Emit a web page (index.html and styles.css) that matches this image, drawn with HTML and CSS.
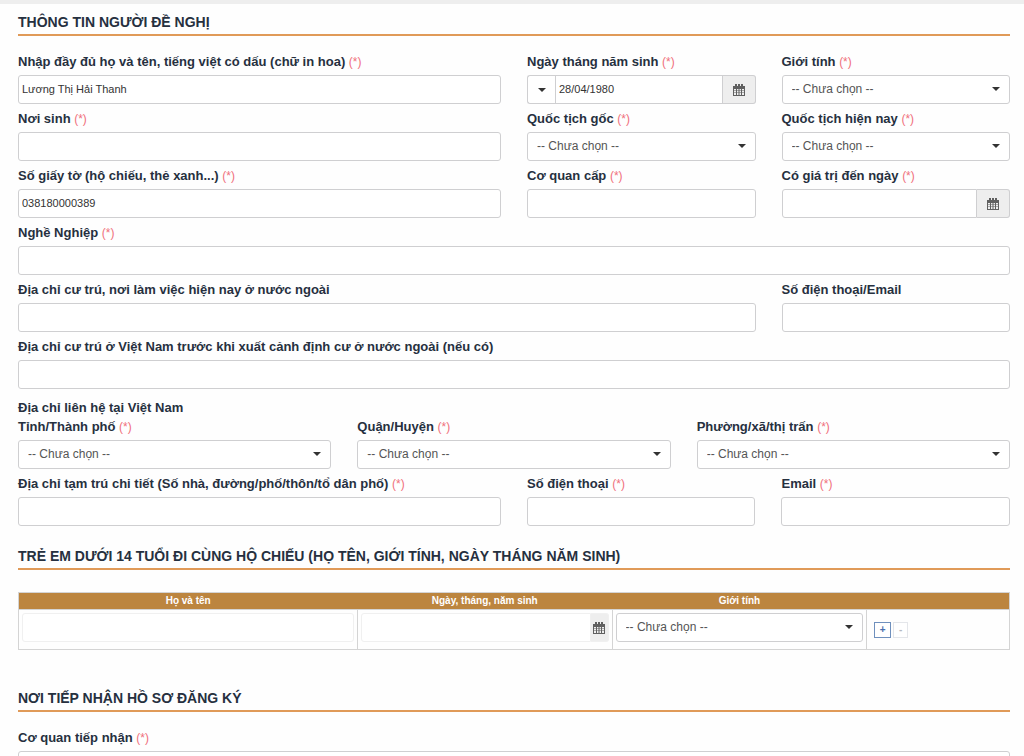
FILE: index.html
```
<!DOCTYPE html>
<html lang="vi">
<head>
<meta charset="utf-8">
<meta name="viewport" content="width=device-width, initial-scale=1">
<title>Thông tin người đề nghị</title>
<link rel="stylesheet" href="styles.css">
</head>
<body>
<svg class="sprite" aria-hidden="true">
  <symbol id="calendar" viewBox="0 0 12 12">
    <path fill="currentColor" fill-rule="evenodd" d="M0 2h2V0h2v2h1V0h2v2h1V0h2v2h2v10H0zM1 5h2v1.500H1zM4 5h1.500v1.500H4zM6.500 5H8v1.500H6.500zM9 5h2v1.500H9zM1 7h2v1.500H1zM4 7h1.500v1.500H4zM6.500 7H8v1.500H6.500zM9 7h2v1.500H9zM1 9h2v2H1zM4 9h1.500v2H4zM6.500 9H8v2H6.500zM9 9h2v2H9z"/>
  </symbol>
</svg>
<form class="page">
  <h2 class="title">THÔNG TIN NGƯỜI ĐỀ NGHỊ</h2>
  <div class="grid">
    <div class="field half">
      <label for="name">Nhập đầy đủ họ và tên, tiếng việt có dấu (chữ in hoa) <span class="req">(*)</span></label>
      <input class="control" id="name" type="text" value="Lương Thị Hải Thanh">
    </div>
    <div class="field quarter">
      <label for="dob">Ngày tháng năm sinh <span class="req">(*)</span></label>
      <div class="group">
        <button class="addon toggle caret" type="button" aria-label="Chọn kiểu ngày"></button>
        <input class="control" id="dob" type="text" value="28/04/1980">
        <button class="addon" type="button" aria-label="Mở lịch"><svg class="icon"><use href="#calendar"/></svg></button>
      </div>
    </div>
    <div class="field quarter">
      <label for="gender">Giới tính <span class="req">(*)</span></label>
      <div class="select caret"><select class="control" id="gender"><option>-- Chưa chọn --</option></select></div>
    </div>

    <div class="field half">
      <label for="birthplace">Nơi sinh <span class="req">(*)</span></label>
      <input class="control" id="birthplace" type="text">
    </div>
    <div class="field quarter">
      <label for="origin">Quốc tịch gốc <span class="req">(*)</span></label>
      <div class="select caret"><select class="control" id="origin"><option>-- Chưa chọn --</option></select></div>
    </div>
    <div class="field quarter">
      <label for="nationality">Quốc tịch hiện nay <span class="req">(*)</span></label>
      <div class="select caret"><select class="control" id="nationality"><option>-- Chưa chọn --</option></select></div>
    </div>

    <div class="field half">
      <label for="document">Số giấy tờ (hộ chiếu, thẻ xanh...) <span class="req">(*)</span></label>
      <input class="control" id="document" type="text" value="038180000389">
    </div>
    <div class="field quarter">
      <label for="issuer">Cơ quan cấp <span class="req">(*)</span></label>
      <input class="control" id="issuer" type="text">
    </div>
    <div class="field quarter">
      <label for="expiry">Có giá trị đến ngày <span class="req">(*)</span></label>
      <div class="group">
        <input class="control" id="expiry" type="text">
        <button class="addon" type="button" aria-label="Mở lịch"><svg class="icon"><use href="#calendar"/></svg></button>
      </div>
    </div>

    <div class="field full">
      <label for="job">Nghề Nghiệp <span class="req">(*)</span></label>
      <input class="control" id="job" type="text">
    </div>

    <div class="field wide">
      <label for="abroad">Địa chỉ cư trú, nơi làm việc hiện nay ở nước ngoài</label>
      <input class="control" id="abroad" type="text">
    </div>
    <div class="field quarter">
      <label for="contact">Số điện thoại/Email</label>
      <input class="control" id="contact" type="text">
    </div>

    <div class="field full">
      <label for="previous">Địa chỉ cư trú ở Việt Nam trước khi xuất cảnh định cư ở nước ngoài (nếu có)</label>
      <input class="control" id="previous" type="text">
    </div>
  </div>

  <h3 class="subtitle">Địa chỉ liên hệ tại Việt Nam</h3>
  <div class="grid">
    <div class="field third">
      <label for="province">Tỉnh/Thành phố <span class="req">(*)</span></label>
      <div class="select caret"><select class="control" id="province"><option>-- Chưa chọn --</option></select></div>
    </div>
    <div class="field third">
      <label for="district">Quận/Huyện <span class="req">(*)</span></label>
      <div class="select caret"><select class="control" id="district"><option>-- Chưa chọn --</option></select></div>
    </div>
    <div class="field third">
      <label for="ward">Phường/xã/thị trấn <span class="req">(*)</span></label>
      <div class="select caret"><select class="control" id="ward"><option>-- Chưa chọn --</option></select></div>
    </div>
    <div class="field half">
      <label for="address">Địa chỉ tạm trú chi tiết (Số nhà, đường/phố/thôn/tổ dân phố) <span class="req">(*)</span></label>
      <input class="control" id="address" type="text">
    </div>
    <div class="field quarter">
      <label for="phone">Số điện thoại <span class="req">(*)</span></label>
      <input class="control" id="phone" type="text">
    </div>
    <div class="field quarter">
      <label for="email">Email <span class="req">(*)</span></label>
      <input class="control" id="email" type="text">
    </div>
  </div>

  <h2 class="title spaced">TRẺ EM DƯỚI 14 TUỔI ĐI CÙNG HỘ CHIẾU (HỌ TÊN, GIỚI TÍNH, NGÀY THÁNG NĂM SINH)</h2>
  <table class="children">
    <colgroup><col class="col-name"><col class="col-date"><col class="col-date"><col></colgroup>
    <thead>
      <tr><th scope="col">Họ và tên</th><th scope="col">Ngày, tháng, năm sinh</th><th scope="col">Giới tính</th><td></td></tr>
    </thead>
    <tbody>
      <tr>
        <td><input class="control faint" type="text" aria-label="Họ và tên"></td>
        <td>
          <div class="group">
            <input class="control faint" type="text" aria-label="Ngày, tháng, năm sinh">
            <button class="addon small faint" type="button" aria-label="Mở lịch"><svg class="icon"><use href="#calendar"/></svg></button>
          </div>
        </td>
        <td><div class="select caret"><select class="control" aria-label="Giới tính"><option>-- Chưa chọn --</option></select></div></td>
        <td>
          <div class="actions">
            <button class="mini" type="button" aria-label="Thêm dòng">+</button>
            <button class="mini muted" type="button" aria-label="Xóa dòng">-</button>
          </div>
        </td>
      </tr>
    </tbody>
  </table>

  <h2 class="title office">NƠI TIẾP NHẬN HỒ SƠ ĐĂNG KÝ</h2>
  <div class="grid">
    <div class="field full">
      <label for="office">Cơ quan tiếp nhận <span class="req">(*)</span></label>
      <input class="control" id="office" type="text">
    </div>
  </div>
</form>
</body>
</html>
```

FILE: styles.css
```
* {
  box-sizing: border-box;
}

html {
  overflow-x: hidden;
  scrollbar-width: none;
}

body {
  margin: 0;
  border-top: 4px solid #eeeeee;
  background: #fefefe;
  color: #26303f;
  font: 13px/22px "Liberation Sans", Arial, sans-serif;
}

.sprite {
  display: none;
}

.page {
  padding: 8px 14px 0 18px;
}

.title {
  margin: 0 0 15px;
  padding-bottom: 2px;
  border-bottom: 2px solid #e09a58;
  font-size: 14px;
  line-height: 20px;
}

.grid {
  display: grid;
  grid-template-columns: repeat(12, minmax(0, 1fr));
  gap: 4px 26px;
}

.field {
  min-width: 0;
}

.full { grid-column: span 12; }
.wide { grid-column: span 9; }
.half { grid-column: span 6; }
.third { grid-column: span 4; }
.quarter { grid-column: span 3; }

label {
  display: block;
  margin-bottom: 2px;
  font-weight: bold;
  white-space: nowrap;
}

.req {
  color: #f0707c;
  font-size: 12px;
  font-weight: normal;
}

.control {
  display: block;
  width: 100%;
  height: 29px;
  min-width: 0;
  margin: 0;
  padding: 0 3px 2px;
  border: 1px solid #cfcfd1;
  border-radius: 3px;
  background: #fff;
  color: #333;
  font: 11px "Liberation Sans", Arial, sans-serif;
}

select.control {
  padding: 0 24px 1px 9px;
  appearance: none;
  color: #555;
  font-size: 12px;
}

.select {
  position: relative;
}

.caret::after {
  content: "";
  border: 4px solid transparent;
  border-top-color: #333;
  border-bottom: 0;
}

.select::after {
  position: absolute;
  top: 12px;
  right: 10px;
  pointer-events: none;
}

.group {
  display: flex;
}

.group .control {
  flex: 1;
  border-radius: 0;
}

.group .control:first-child {
  border-radius: 3px 0 0 3px;
}

.addon {
  display: flex;
  flex: none;
  align-items: center;
  justify-content: center;
  width: 33px;
  padding: 0;
  border: 1px solid #cfcfd1;
  border-left: 0;
  border-radius: 0 3px 3px 0;
  background: #eeeeee;
  color: #606060;
}

.toggle {
  width: 28px;
  border-right: 0;
  border-left: 1px solid #cfcfd1;
  border-radius: 3px 0 0 3px;
  background: #fff;
}

.small {
  width: 18px;
}

.icon {
  width: 12px;
  height: 12px;
}

.subtitle {
  margin: 11px 0 0;
  font-size: 13px;
  line-height: 16px;
}

.spaced {
  margin: 20px 0 22px;
}

.children {
  width: 100%;
  border: 1px solid #d4d4d4;
  border-collapse: collapse;
  table-layout: fixed;
}

.children thead {
  background: #bc853f;
  color: #fff;
}

.children th,
.children thead td {
  height: 17px;
  padding: 0;
  font-size: 10px;
  line-height: 16px;
}

.children tbody td {
  padding: 3px 3px 7px;
  border: 1px solid #d4d4d4;
  vertical-align: top;
}

.col-name { width: 34.2%; }
.col-date { width: 25.7%; }

.faint {
  border-color: #f0f0f0;
}

.actions {
  display: flex;
  gap: 2px;
  padding: 9px 3px 0 4px;
}

.mini {
  width: 17px;
  height: 16px;
  padding: 0;
  border: 1px solid #6f90bd;
  background: #fff;
  color: #4a6fae;
  font: bold 10px/12px "Liberation Sans", Arial, sans-serif;
}

.muted {
  width: 15px;
  border-color: #e4e6ea;
  color: #b5b9c0;
}

.office {
  margin-top: 38px;
}
```
